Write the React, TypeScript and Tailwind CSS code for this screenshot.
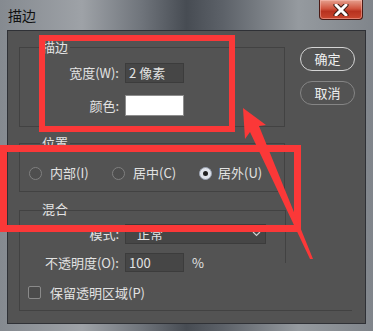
import React from "react";

const font = { fontFamily: '"Noto Sans CJK SC", "Noto Sans", sans-serif' };

function Radio({ checked }: { checked?: boolean }) {
  if (checked) {
    return (
      <span className="flex h-[13px] w-[13px] shrink-0 items-center justify-center rounded-full border border-[#9aa2b2] bg-[#dfe3ea]">
        <span className="h-[5px] w-[5px] rounded-full bg-[#202020]" />
      </span>
    );
  }
  return <span className="block h-[13px] w-[13px] shrink-0 rounded-full border border-[#808080] bg-[#4e4e4e]" />;
}

function Group({ label, className, children }: { label: string; className: string; children?: React.ReactNode }) {
  return (
    <div className={`relative border-[#424242] ${className}`}>
      <span className="absolute left-[20px] top-[-10px] bg-[#535353] px-[2px] text-[13px] leading-[18px] text-[#e4e4e4]">{label}</span>
      {children}
    </div>
  );
}

export default function App() {
  return (
    <div className="relative h-[331px] w-[373px] overflow-hidden text-[#e2e2e2]" style={font}>
      <div className="flex h-full w-full flex-col bg-[linear-gradient(90deg,#858a90_0%,#9ea2a7_22%,#6f747b_38%,#474c53_50%,#5d6269_60%,#959a9f_80%,#80858b_100%)]">
        {/* title bar */}
        <div className="relative flex h-[30px] items-center pl-[8px]">
          <span className="text-[14px] leading-none text-[#111]">描边</span>
          <div className="absolute right-[10px] top-0 flex h-[20px] w-[44px] items-center justify-center rounded-b-[4px] border border-t-0 border-[#4a1a14] bg-[linear-gradient(180deg,#e6a08e_0%,#d0553f_45%,#b8321f_60%,#c9472f_100%)] shadow-[inset_0_0_0_1px_rgba(255,200,190,0.45)]">
            <svg width="16" height="12" viewBox="0 0 16 12">
              <path d="M3 1 L13 11 M13 1 L3 11" stroke="#3a1a14" strokeWidth="5" strokeLinecap="round" />
              <path d="M3 1 L13 11 M13 1 L3 11" stroke="#ffffff" strokeWidth="3" strokeLinecap="round" />
            </svg>
          </div>
        </div>
        <div className="flex flex-1 px-[7px] pb-[7px]">
          {/* client area */}
          <div className="flex flex-1 border border-[#2f3136] bg-[#535353] pl-[11px] pt-[16px]">
            <div className="flex w-[333px] flex-col">
              <Group label="描边" className="h-[80px] w-[266px] border pt-[15px]">
                <div className="flex items-center">
                  <span className="w-[99px] text-right text-[13px]">宽度(W):</span>
                  <div className="ml-[6px] flex h-[20px] w-[59px] items-center border border-[#3c3c3c] bg-[#464646] pl-[3px] text-[13px]">2 像素</div>
                </div>
                <div className="mt-[12px] flex items-center">
                  <span className="w-[99px] text-right text-[13px]">颜色:</span>
                  <div className="ml-[6px] h-[21px] w-[59px] border border-[#8d8d8d] bg-white" />
                </div>
              </Group>
              <Group label="位置" className="mt-[16px] h-[49px] w-[266px] border">
                <div className="flex items-center pl-[9px] pt-[20px] text-[13px] leading-[18px]">
                  <div className="flex w-[83px] items-center gap-[8px]">
                    <Radio />
                    <span>内部(I)</span>
                  </div>
                  <div className="flex w-[87px] items-center gap-[8px]">
                    <Radio />
                    <span>居中(C)</span>
                  </div>
                  <div className="flex items-center gap-[6px]">
                    <Radio checked />
                    <span>居外(U)</span>
                  </div>
                </div>
              </Group>
              <Group label="混合" className="mt-[18px] h-[101px] w-[333px] border-b border-l border-t-0">
                <div className="absolute left-0 top-0 h-px w-[266px] bg-[#424242]" />
                <div className="absolute left-[265px] top-0 h-[53px] w-px bg-[#424242]" />
                <div className="flex items-center pt-[14px] text-[13px]">
                  <span className="w-[99px] text-right">模式:</span>
                  <div className="ml-[6px] flex h-[20px] w-[141px] items-center justify-between border border-[#3c3c3c] bg-[#464646] pl-[11px] pr-[4px]">
                    <span>正常</span>
                    <svg width="9" height="6" viewBox="0 0 9 6"><path d="M1 1 L4.5 4.5 L8 1" stroke="#cfcfcf" fill="none" strokeWidth="1.2" /></svg>
                  </div>
                </div>
                <div className="mt-[9px] flex items-center text-[13px]">
                  <span className="w-[99px] text-right">不透明度(O):</span>
                  <div className="ml-[6px] flex h-[19px] w-[59px] items-center border border-[#3c3c3c] bg-[#464646] pl-[3px]">100</div>
                  <span className="ml-[8px]">%</span>
                </div>
                <div className="mt-[10px] flex items-center pl-[8px] text-[13px]">
                  <span className="h-[13px] w-[13px] rounded-[2px] border border-[#8a8a8a] bg-[#4b4b4b]" />
                  <span className="ml-[9px]">保留透明区域(P)</span>
                </div>
              </Group>
            </div>
            <div className="ml-[-52px] flex flex-col gap-[10px]">
              <div className="flex h-[24px] w-[55px] items-center justify-center rounded-full border-[1.5px] border-[#d4d4d4] text-[13px] text-[#f0f0f0]">确定</div>
              <div className="flex h-[24px] w-[55px] items-center justify-center rounded-full border-[1.5px] border-[#858585] text-[13px] text-[#f0f0f0]">取消</div>
            </div>
          </div>
        </div>
      </div>

      {/* red annotations */}
      <div className="pointer-events-none absolute left-[39px] top-[35px] h-[97px] w-[196px] border-[6px] border-[#fb3838]" />
      <div className="pointer-events-none absolute left-[0px] top-[145px] h-[87px] w-[301px] border-[7px] border-[#fb3838]" />
      <svg className="pointer-events-none absolute left-0 top-0" width="373" height="331" viewBox="0 0 373 331">
        <polygon points="243,108 266,125 259,126 313,259 310,259 250,132 245,139" fill="#fb3838" />
      </svg>
    </div>
  );
}
